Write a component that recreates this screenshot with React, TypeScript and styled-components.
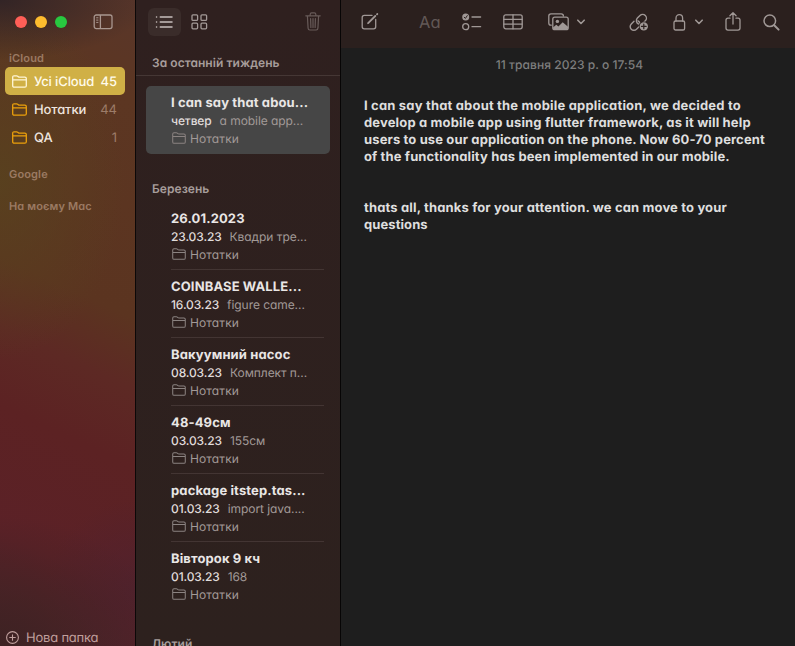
import React from "react";
import styled, { createGlobalStyle } from "styled-components";

const GlobalStyle = createGlobalStyle`
  * { box-sizing: border-box; }
  html, body { margin: 0; height: 100%; overflow: hidden; background: #1e1e1e; }
  body {
    font-family: Inter, "Noto Sans", sans-serif;
    font-feature-settings: "cv11" 1;
    font-size: 12px;
    text-rendering: geometricPrecision;
    -webkit-font-smoothing: antialiased;
  }
  svg { display: block; flex: none; overflow: visible; }
`;

const Window = styled.div`
  display: grid;
  grid-template-columns: 136px 205px 1fr;
  width: 795px;
  height: 646px;
  overflow: hidden;
`;

const Sidebar = styled.aside`
  display: flex;
  flex-direction: column;
  border-right: 1px solid #0c0808;
  background:
    radial-gradient(ellipse 150px 60px at 0 0, rgba(43, 33, 38, 0.85), rgba(43, 33, 38, 0) 100%),
    radial-gradient(ellipse 125px 180px at 0 180px, rgba(88, 66, 30, 0.85), rgba(88, 66, 30, 0) 100%),
    radial-gradient(ellipse 170px 130px at 0 646px, rgba(60, 34, 34, 0.9), rgba(60, 34, 34, 0) 100%),
    radial-gradient(ellipse 90px 90px at 136px 590px, rgba(78, 34, 46, 0.8), rgba(78, 34, 46, 0) 100%),
    linear-gradient(205deg, #59362a 0%, #5c3622 14%, #5b3420 45%, #5d2924 55%, #5c2223 66%, #5b2127 84%, #4a242a 100%);
`;

const TitleBar = styled.div`
  display: flex;
  align-items: center;
  height: 44px;
  padding-left: 15px;
`;

const Lights = styled.div`
  display: flex;
  gap: 8px;
  margin-right: 26px;
`;

const Light = styled.span<{ $color: string }>`
  width: 12px;
  height: 12px;
  border-radius: 50%;
  background: ${(p) => p.$color};
`;

const Account = styled.div<{ $gap?: number }>`
  height: 16px;
  line-height: 16px;
  margin-top: ${(p) => p.$gap ?? 0}px;
  padding-left: 9px;
  font-size: 11px;
  font-weight: 600;
  letter-spacing: 0.15px;
  color: #9b7a63;
  white-space: nowrap;
`;

const Folders = styled.nav`
  display: flex;
  flex-direction: column;
  margin: 1px 10px 0 5px;
`;

const FolderRow = styled.div<{ $active?: boolean }>`
  display: flex;
  align-items: center;
  height: 28px;
  padding: 0 8px 0 7px;
  border-radius: 5px;
  font-size: 13px;
  font-weight: 500;
  color: ${(p) => (p.$active ? "#fffbea" : "#eee5df")};
  background: ${(p) => (p.$active ? "#d0b046" : "transparent")};
  > svg { color: ${(p) => (p.$active ? "#fff6d8" : "#eca00b")}; }
  > span { padding-top: 2px; }
`;

const FolderName = styled.span`
  margin-left: 7px;
  flex: 1;
  white-space: nowrap;
  letter-spacing: -0.12px;
`;

const FolderCount = styled.span<{ $active?: boolean }>`
  font-weight: ${(p) => (p.$active ? 500 : 400)};
  color: ${(p) => (p.$active ? "#fffbea" : "#9c7c69")};
`;

const NewFolder = styled.div`
  display: flex;
  align-items: center;
  gap: 7px;
  height: 18px;
  margin-top: auto;
  padding-left: 6px;
  font-size: 13px;
  letter-spacing: -0.2px;
  color: #c09f9d;
  > span { padding-top: 2px; }
`;

const NoteList = styled.section`
  display: flex;
  flex-direction: column;
  overflow: hidden;
  border-right: 1px solid #070505;
  background: linear-gradient(#2f201f, #2d211e);
`;

const ListToolbar = styled.div`
  display: flex;
  align-items: center;
  flex: none;
  height: 44px;
  padding: 0 18px 0 12px;
  color: #a39997;
`;

const ViewButton = styled.div`
  display: grid;
  place-items: center;
  width: 33px;
  height: 28px;
  margin-right: 10px;
  padding-right: 2px;
  border-radius: 6px;
  background: #3a2c2a;
  color: #c8bfbd;
`;

const TrashSlot = styled.div`
  margin-left: auto;
  padding: 0 1px 2px 0;
  color: #685b59;
`;

const GroupTitle = styled.div<{ $top?: boolean; $gap?: number }>`
  flex: none;
  height: ${(p) => (p.$top ? 32 : 20)}px;
  margin-top: ${(p) => p.$gap ?? 0}px;
  padding-left: 16px;
  line-height: ${(p) => (p.$top ? 37 : 21)}px;
  border-bottom: ${(p) => (p.$top ? "1px solid #453735" : "none")};
  font-size: 12px;
  font-weight: 600;
  letter-spacing: 0.05px;
  color: #a79d9b;
`;

const Note = styled.article<{ $active?: boolean }>`
  flex: none;
  height: 68px;
  margin: ${(p) => (p.$active ? "10px 10px 0" : "0 10px")};
  padding: 7px 6px 0 25px;
  border-radius: ${(p) => (p.$active ? 5 : 0)}px;
  background: ${(p) => (p.$active ? "#464646" : "transparent")};
`;

const NoteBody = styled.div<{ $line?: boolean }>`
  height: 61px;
  border-bottom: 1px solid ${(p) => (p.$line ? "#433533" : "transparent")};
`;

const NoteTitle = styled.div`
  height: 18px;
  line-height: 21px;
  font-size: 13px;
  font-weight: 700;
  letter-spacing: 0.12px;
  color: #e9e6e5;
  white-space: nowrap;
`;

const NoteMeta = styled.div`
  display: flex;
  gap: 8px;
  height: 18px;
  line-height: 19px;
  letter-spacing: -0.06px;
  white-space: nowrap;
  color: #a29a98;
`;

const NoteDate = styled.span`
  font-weight: 500;
  letter-spacing: -0.12px;
  color: #e0dcdb;
`;

const NoteFolder = styled.div`
  display: flex;
  align-items: center;
  gap: 4px;
  height: 18px;
  padding-left: 1px;
  letter-spacing: 0.1px;
  color: #a29a98;
  > svg { color: #8b8381; }
`;

const Spacer = styled.div`
  height: 4px;
`;

const Editor = styled.main`
  display: flex;
  flex-direction: column;
  background: #1e1e1e;
`;

const EditorToolbar = styled.header`
  display: flex;
  align-items: center;
  height: 48px;
  padding: 0 15px 4px 20px;
  background: #2b201e;
  color: #a09896;
`;

const Tool = styled.div<{ $gap?: number }>`
  display: flex;
  align-items: center;
  margin-left: ${(p) => p.$gap ?? 0}px;
`;

const FormatTool = styled(Tool)`
  width: 21px;
  font-size: 16.5px;
  line-height: 20px;
  color: #625856;
`;

const Stamp = styled.div`
  height: 32px;
  line-height: 33px;
  padding-left: 3px;
  text-align: center;
  font-size: 12px;
  font-weight: 500;
  letter-spacing: 0.05px;
  color: #7e7e7e;
`;

const Content = styled.div`
  padding: 18px 0 0 23px;
  font-size: 13px;
  line-height: 17px;
  font-weight: 700;
  color: #dedede;
  white-space: nowrap;
`;

const Line = styled.p<{ $track?: number }>`
  height: 17px;
  margin: 0;
  letter-spacing: ${(p) => p.$track ?? 0}px;
`;

type IconProps = { w: number; h: number; sw?: number; children: React.ReactNode };
const Icon = ({ w, h, sw = 1.2, children }: IconProps) => (
  <svg width={w} height={h} viewBox={`0 0 ${w} ${h}`} fill="none" stroke="currentColor"
    strokeWidth={sw} strokeLinecap="round" strokeLinejoin="round">{children}</svg>
);

const FolderIcon = ({ small }: { small?: boolean }) => (
  <svg width={small ? 14 : 15} height={small ? 12 : 13} viewBox="0 0 15 13" fill="none"
    stroke="currentColor" strokeWidth={small ? 1.1 : 1.3} strokeLinejoin="round">
    <path d="M.7 10.7V2.2Q.7.8 2.1.8H4.6Q5.2.8 5.7 1.2L6.3 1.7Q6.8 2.1 7.4 2.1H12.8Q14.3 2.1 14.3 3.6V10.7Q14.3 12.2 12.8 12.2H2.2Q.7 12.2.7 10.7ZM.7 4.9H14.3" />
  </svg>
);

const Chevron = () => (
  <Icon w={8} h={6} sw={1.6}><path d="M.8 1.2 4 4.5 7.2 1.2" /></Icon>
);

const notes = [
  { title: "26.01.2023", date: "23.03.23", text: "Квадри тре..." },
  { title: "COINBASE WALLE...", date: "16.03.23", text: "figure came..." },
  { title: "Вакуумний насос", date: "08.03.23", text: "Комплект п..." },
  { title: "48-49см", date: "03.03.23", text: "155см" },
  { title: "package itstep.tas...", date: "01.03.23", text: "import java...." },
  { title: "Вівторок 9 кч", date: "01.03.23", text: "168" },
];

type NoteData = { title: string; date: string; text: string };
const NoteItem = ({ note, active, line }: { note: NoteData; active?: boolean; line?: boolean }) => (
  <Note $active={active}>
    <NoteBody $line={line}>
      <NoteTitle>{note.title}</NoteTitle>
      <NoteMeta><NoteDate>{note.date}</NoteDate><span>{note.text}</span></NoteMeta>
      <NoteFolder><FolderIcon small />Нотатки</NoteFolder>
    </NoteBody>
  </Note>
);

export default function App() {
  return (
    <>
      <GlobalStyle />
      <Window>
        <Sidebar>
          <TitleBar>
            <Lights>
              <Light $color="#ff5f57" />
              <Light $color="#febc2e" />
              <Light $color="#28c840" />
            </Lights>
            <svg width="20" height="16" viewBox="0 0 20 16" fill="none" stroke="#a8968f" strokeWidth="1.3">
              <rect x="1.2" y="1" width="17.8" height="13.6" rx="2" />
              <path d="M7.4 1V14.6" />
              <path d="M3.2 3.8H5.4M3.2 6.1H5.4M3.2 8.4H5.4" strokeWidth="1" />
            </svg>
          </TitleBar>
          <Account $gap={6}>iCloud</Account>
          <Folders>
            <FolderRow $active><FolderIcon /><FolderName>Усі iCloud</FolderName><FolderCount $active>45</FolderCount></FolderRow>
            <FolderRow><FolderIcon /><FolderName>Нотатки</FolderName><FolderCount>44</FolderCount></FolderRow>
            <FolderRow><FolderIcon /><FolderName>QA</FolderName><FolderCount>1</FolderCount></FolderRow>
          </Folders>
          <Account $gap={15}>Google</Account>
          <Account $gap={16}>На моєму Mac</Account>
          <NewFolder>
            <Icon w={13} h={13} sw={1.1}>
              <circle cx="6.5" cy="6.5" r="5.9" />
              <path d="M6.5 3.7V9.3M3.7 6.5H9.3" />
            </Icon>
            <span>Нова папка</span>
          </NewFolder>
        </Sidebar>

        <NoteList>
          <ListToolbar>
            <ViewButton>
              <Icon w={18} h={14} sw={1.5}>
                <path d="M5.3 2H17M5.3 7H17M5.3 12H17M1.5 2H1.6M1.5 7H1.6M1.5 12H1.6" />
              </Icon>
            </ViewButton>
            <Icon w={17} h={16} sw={1.3}>
              <rect x="1" y=".8" width="5.6" height="5.6" rx="1" />
              <rect x="10" y=".8" width="5.6" height="5.6" rx="1" />
              <rect x="1" y="9.2" width="5.6" height="5.6" rx="1" />
              <rect x="10" y="9.2" width="5.6" height="5.6" rx="1" />
            </Icon>
            <TrashSlot>
              <Icon w={16} h={19}>
                <path d="M.8 3.8H15.2M5.2 3.6V2.2Q5.2.8 6.6.8H9.4Q10.8.8 10.8 2.2V3.6M2.4 4 3.1 16.3Q3.2 18 4.8 18H11.2Q12.8 18 12.9 16.3L13.6 4M5.6 6.5 5.9 15.5M8 6.5V15.5M10.4 6.5 10.1 15.5" />
              </Icon>
            </TrashSlot>
          </ListToolbar>
          <GroupTitle $top>За останній тиждень</GroupTitle>
          <NoteItem active note={{ title: "I can say that abou...", date: "четвер", text: "a mobile app..." }} />
          <GroupTitle $gap={24}>Березень</GroupTitle>
          <div>
            <Spacer />
            {notes.map((n, i) => <NoteItem key={n.title} note={n} line={i < notes.length - 1} />)}
          </div>
          <GroupTitle $gap={23}>Лютий</GroupTitle>
        </NoteList>

        <Editor>
          <EditorToolbar>
            <Tool>
              <Icon w={18} h={18} sw={1.3}>
                <path d="M11 2.4H3.3Q1.2 2.4 1.2 4.5V13.8Q1.2 15.9 3.3 15.9H12.6Q14.7 15.9 14.7 13.8V6.4" />
                <path d="M7.4 9.9 14.3 3M16 1.3 16.3 1" strokeWidth="1.8" />
                <path d="M6 11.3 8.2 10.3 7 9.1Z" fill="currentColor" stroke="none" />
              </Icon>
            </Tool>
            <FormatTool $gap={40}>Aa</FormatTool>
            <Tool $gap={22}>
              <Icon w={20} h={18} sw={1.3}>
                <circle cx="3.7" cy="4" r="3.5" fill="currentColor" stroke="none" />
                <path d="M2.2 4.2 3.4 5.4 5.3 2.6" stroke="#2b201e" strokeWidth="1" />
                <circle cx="3.7" cy="13.7" r="3" />
                <path d="M10 4H18.6M10 13.7H18.6" />
              </Icon>
            </Tool>
            <Tool $gap={21}>
              <Icon w={20} h={16} sw={1.3}>
                <rect x=".8" y=".8" width="18.4" height="14" rx="2" />
                <path d="M.8 5.4H19.2M.8 10.1H19.2M10 .8V14.8" />
              </Icon>
            </Tool>
            <Tool $gap={25}>
              <Icon w={21} h={18} sw={1.3}>
                <path d="M3.2 12.2H3Q.8 12.2.8 10V3Q.8.8 3 .8H13.2Q15.4.8 15.4 3" />
                <rect x="4.8" y="4.1" width="15.4" height="12.6" rx="2" />
                <circle cx="9.4" cy="8.4" r="1.7" fill="currentColor" stroke="none" />
                <path d="M5 14.5 8.3 11.8 10.4 13.4 14.7 9.3 20 13.7V15Q20 16.6 18.2 16.6H6.7Q5 16.6 5 15Z" fill="currentColor" stroke="none" />
              </Icon>
            </Tool>
            <Tool $gap={8}><Chevron /></Tool>
            <Tool $gap={44}>
              <Icon w={20} h={19} sw={1.4}>
                <path d="M5 8.2 2.3 10.9A3.7 3.7 0 0 0 7.5 16.2L10 13.7A3.7 3.7 0 0 0 9 7.8" />
                <path d="M13.8 10.3 16.3 7.8A3.7 3.7 0 0 0 11 2.5L8.4 5.1A3.7 3.7 0 0 0 9.5 11" />
                <circle cx="14.8" cy="13.4" r="5" fill="#2b201e" stroke="none" />
                <circle cx="14.8" cy="13.4" r="4.2" fill="currentColor" stroke="none" />
                <path d="M14.8 11.1V15.7M12.5 13.4H17.1" stroke="#2b201e" strokeWidth="1.2" />
              </Icon>
            </Tool>
            <Tool $gap={24}>
              <Icon w={13} h={17} sw={1.3}>
                <rect x="1" y="7" width="10.6" height="9" rx="1.6" />
                <path d="M3 7V4.2A3.3 3.5 0 0 1 9.6 4.2V7" />
              </Icon>
            </Tool>
            <Tool $gap={9}><Chevron /></Tool>
            <Tool $gap={22}>
              <Icon w={16} h={20} sw={1.3}>
                <path d="M5 6.2H3Q1 6.2 1 8.2V16.1Q1 18.1 3 18.1H13Q15 18.1 15 16.1V8.2Q15 6.2 13 6.2H11M8 12V.9M4.9 3.8 8 .7 11.1 3.8" />
              </Icon>
            </Tool>
            <Tool $gap={22}>
              <Icon w={17} h={17} sw={1.5}>
                <circle cx="6.8" cy="6.8" r="5.8" />
                <path d="M11.2 11.2 15.6 15.6" strokeWidth="2" />
              </Icon>
            </Tool>
          </EditorToolbar>
          <Stamp>11 травня 2023 р. о 17:54</Stamp>
          <Content>
            <Line $track={0.18}>I can say that about the mobile application, we decided to</Line>
            <Line $track={0.15}>develop a mobile app using flutter framework, as it will help</Line>
            <Line $track={0.13}>users to use our application on the phone. Now 60-70 percent</Line>
            <Line $track={0.13}>of the functionality has been implemented in our mobile.</Line>
            <Line />
            <Line />
            <Line $track={0.15}>thats all, thanks for your attention. we can move to your</Line>
            <Line $track={0.08}>questions</Line>
          </Content>
        </Editor>
      </Window>
    </>
  );
}
